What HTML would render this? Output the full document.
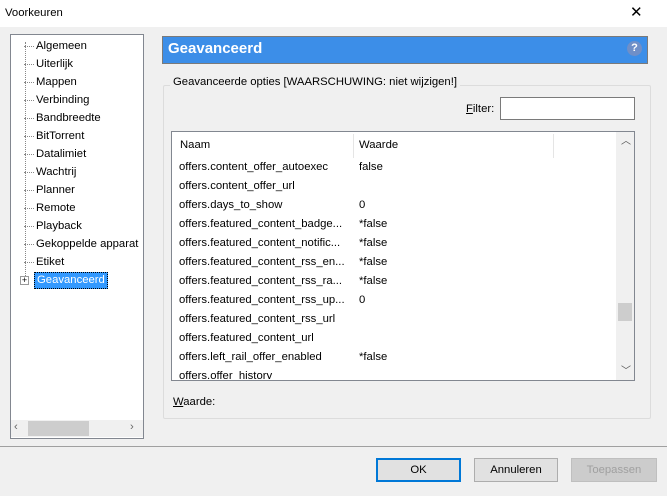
<html><head><style>
body{margin:0;width:667px;height:496px;background:#f0f0f0;font-family:"Liberation Sans",sans-serif;font-size:11.3px;line-height:15px;color:#000;position:relative;overflow:hidden}
.a{position:absolute}
.tree div{position:absolute;left:36px;white-space:nowrap}
.dot{position:absolute;left:24px;width:10px;border-top:1px dotted #888}
.row{position:absolute;left:179px;white-space:nowrap}
.val{position:absolute;left:359px}
.btn{position:absolute;top:458px;height:22px;border:1px solid #adadad;background:#e1e1e1;text-align:center;line-height:22px}
</style></head><body>
<div class="a" style="left:0;top:0;width:667px;height:27px;background:#fff"></div>
<div class="a" style="left:5px;top:6px">Voorkeuren</div>
<div class="a" style="left:630px;top:5px;font-size:15px;font-family:'DejaVu Sans',sans-serif;font-weight:200">✕</div>

<div class="a" style="left:10px;top:34px;width:132px;height:403px;background:#fff;border:1px solid #828790;overflow:hidden">
<div class="a" style="left:14px;top:7px;height:240px;border-left:1px dotted #888"></div>
</div>
<div class="tree">
<div style="top:39px">Algemeen</div><div style="top:57px">Uiterlijk</div><div style="top:75px">Mappen</div><div style="top:93px">Verbinding</div><div style="top:111px">Bandbreedte</div><div style="top:129px">BitTorrent</div><div style="top:147px">Datalimiet</div><div style="top:165px">Wachtrij</div><div style="top:183px">Planner</div><div style="top:201px">Remote</div><div style="top:219px">Playback</div><div style="top:237px">Gekoppelde apparat</div><div style="top:255px">Etiket</div>
<div style="top:272px;left:34px;background:#3399ff;color:#fff;padding:0 2px;border:1px dotted #000">Geavanceerd</div>
</div>
<div class="dot" style="top:46px"></div><div class="dot" style="top:64px"></div><div class="dot" style="top:82px"></div><div class="dot" style="top:100px"></div><div class="dot" style="top:118px"></div><div class="dot" style="top:136px"></div><div class="dot" style="top:154px"></div><div class="dot" style="top:172px"></div><div class="dot" style="top:190px"></div><div class="dot" style="top:208px"></div><div class="dot" style="top:226px"></div><div class="dot" style="top:244px"></div><div class="dot" style="top:262px"></div>
<div class="a" style="left:20px;top:276px;width:7px;height:7px;border:1px solid #999;background:#fff;font-size:9px;line-height:7px;text-align:center">+</div>
<div class="a" style="left:11px;top:420px;width:132px;height:17px;background:#f0f0f0"></div>
<div class="a" style="left:28px;top:421px;width:61px;height:15px;background:#cdcdcd"></div>
<div class="a" style="left:14px;top:420px;color:#666">‹</div><div class="a" style="left:130px;top:420px;color:#666">›</div>

<div class="a" style="left:162px;top:36px;width:484px;height:26px;background:#3c8ee8;border:1px solid #7a7a7a"></div>
<div class="a" style="left:168px;top:40px;color:#fff;font-weight:bold;font-size:15px;line-height:17px">Geavanceerd</div>
<div class="a" style="left:627px;top:41px;width:15px;height:15px;border-radius:50%;background:#6f8fc8;color:#fff;font-size:11px;text-align:center;line-height:15px;font-weight:bold">?</div>

<div class="a" style="left:163px;top:85px;width:486px;height:332px;border:1px solid #dcdcdc;border-radius:2px"></div>
<div class="a" style="left:170px;top:75px;background:#f0f0f0;padding:0 3px">Geavanceerde opties [WAARSCHUWING: niet wijzigen!]</div>
<div class="a" style="left:466px;top:102px"><u>F</u>ilter:</div>
<div class="a" style="left:500px;top:97px;width:133px;height:21px;background:#fff;border:1px solid #7a7a7a"></div>

<div class="a" style="left:171px;top:131px;width:462px;height:248px;background:#fff;border:1px solid #828790;overflow:hidden">
<div class="a" style="left:181px;top:2px;height:24px;border-left:1px solid #e5e5e5"></div>
<div class="a" style="left:381px;top:2px;height:24px;border-left:1px solid #e5e5e5"></div>
<div class="a" style="left:444px;top:0;width:18px;height:248px;background:#f0f0f0"></div>
<div class="a" style="left:446px;top:171px;width:14px;height:18px;background:#cdcdcd"></div>
<div class="a" style="left:449px;top:2px;color:#555;font-size:10px">︿</div>
<div class="a" style="left:449px;top:232px;color:#555;font-size:10px">﹀</div>
</div>
<div class="row" style="top:138px;left:180px">Naam</div><div class="row" style="top:138px;left:359px">Waarde</div>
<div class="row" style="top:160px">offers.content_offer_autoexec<span class="val" style="left:180px">false</span></div>
<div class="row" style="top:179px">offers.content_offer_url</div>
<div class="row" style="top:198px">offers.days_to_show<span class="val" style="left:180px">0</span></div>
<div class="row" style="top:217px">offers.featured_content_badge...<span class="val" style="left:180px">*false</span></div>
<div class="row" style="top:236px">offers.featured_content_notific...<span class="val" style="left:180px">*false</span></div>
<div class="row" style="top:255px">offers.featured_content_rss_en...<span class="val" style="left:180px">*false</span></div>
<div class="row" style="top:274px">offers.featured_content_rss_ra...<span class="val" style="left:180px">*false</span></div>
<div class="row" style="top:293px">offers.featured_content_rss_up...<span class="val" style="left:180px">0</span></div>
<div class="row" style="top:312px">offers.featured_content_rss_url</div>
<div class="row" style="top:331px">offers.featured_content_url</div>
<div class="row" style="top:350px">offers.left_rail_offer_enabled<span class="val" style="left:180px">*false</span></div>
<div class="a" style="left:172px;top:367px;width:444px;height:12px;overflow:hidden"><div class="a" style="left:7px;top:2px">offers.offer_history</div></div>
<div class="a" style="left:173px;top:395px"><u>W</u>aarde:</div>

<div class="a" style="left:0;top:446px;width:667px;height:1px;background:#a0a0a0"></div>
<div class="a" style="left:0;top:447px;width:667px;height:49px;background:#f0f0f0"></div>
<div class="btn" style="left:376px;width:83px;border:1px solid #0078d7;box-shadow:inset 0 0 0 1px #0078d7">OK</div>
<div class="btn" style="left:474px;width:82px">Annuleren</div>
<div class="btn" style="left:571px;width:84px;color:#a0a0a0;background:#ccc;border-color:#bfbfbf">Toepassen</div>
</body></html>
